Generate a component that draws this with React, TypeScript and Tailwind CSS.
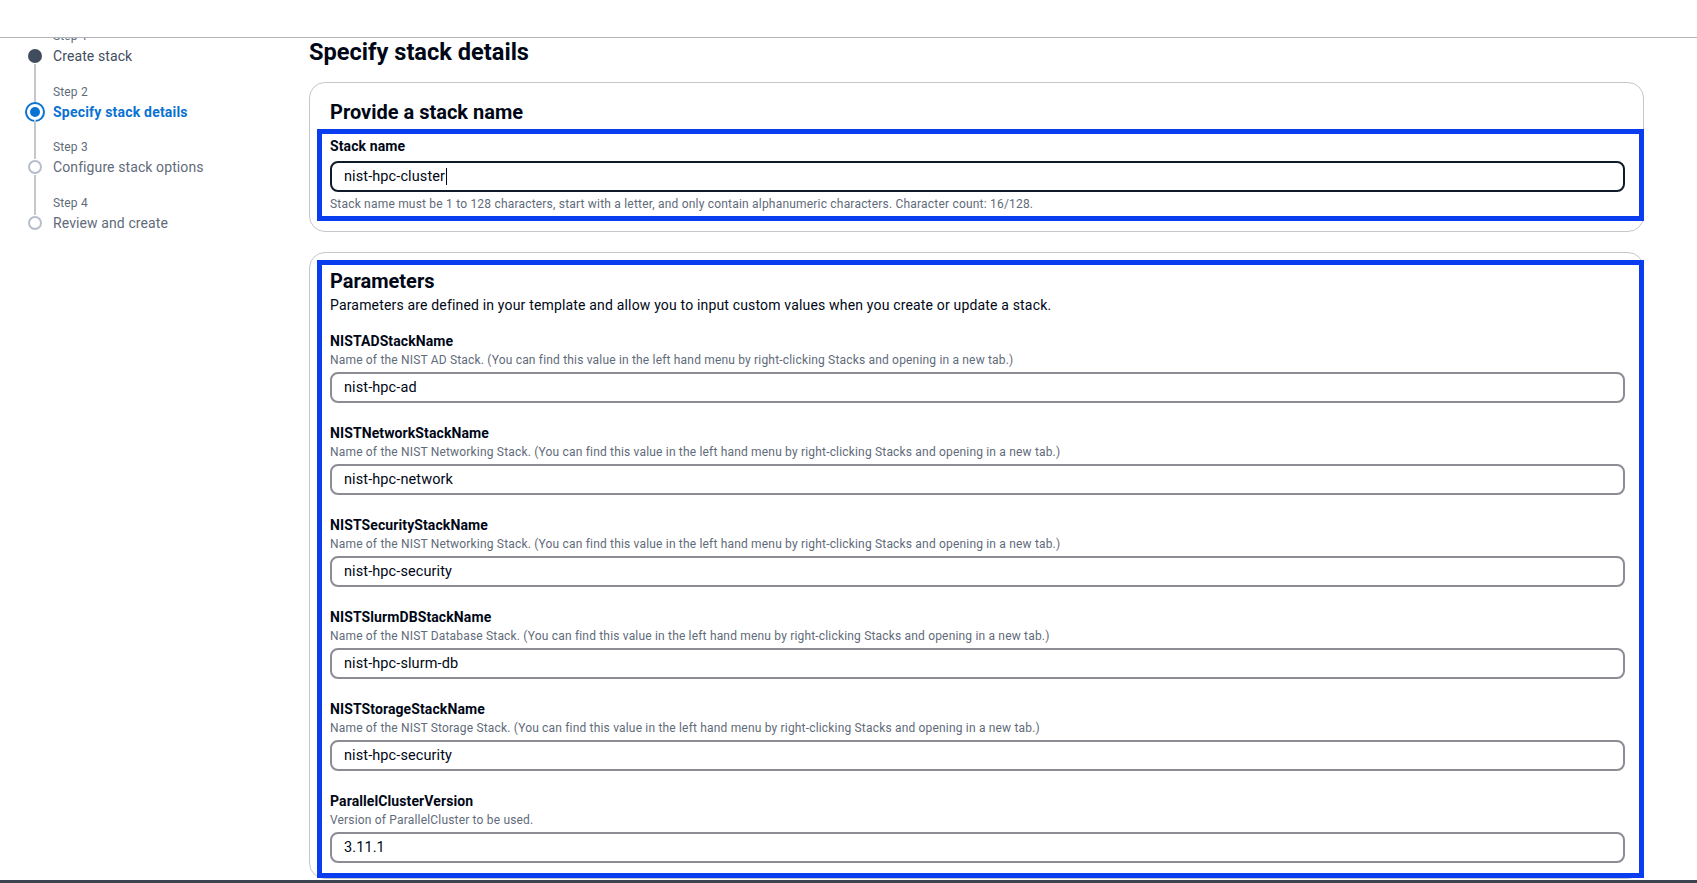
import React from "react";

const steps = [
  { label: "Step 1", title: "Create stack", state: "done" },
  { label: "Step 2", title: "Specify stack details", state: "current" },
  { label: "Step 3", title: "Configure stack options", state: "todo" },
  { label: "Step 4", title: "Review and create", state: "todo" },
];

const params = [
  {
    name: "NISTADStackName",
    desc: "Name of the NIST AD Stack. (You can find this value in the left hand menu by right-clicking Stacks and opening in a new tab.)",
    value: "nist-hpc-ad",
  },
  {
    name: "NISTNetworkStackName",
    desc: "Name of the NIST Networking Stack. (You can find this value in the left hand menu by right-clicking Stacks and opening in a new tab.)",
    value: "nist-hpc-network",
  },
  {
    name: "NISTSecurityStackName",
    desc: "Name of the NIST Networking Stack. (You can find this value in the left hand menu by right-clicking Stacks and opening in a new tab.)",
    value: "nist-hpc-security",
  },
  {
    name: "NISTSlurmDBStackName",
    desc: "Name of the NIST Database Stack. (You can find this value in the left hand menu by right-clicking Stacks and opening in a new tab.)",
    value: "nist-hpc-slurm-db",
  },
  {
    name: "NISTStorageStackName",
    desc: "Name of the NIST Storage Stack. (You can find this value in the left hand menu by right-clicking Stacks and opening in a new tab.)",
    value: "nist-hpc-security",
  },
  {
    name: "ParallelClusterVersion",
    desc: "Version of ParallelCluster to be used.",
    value: "3.11.1",
  },
];

function StepDot({ state }: { state: string }) {
  if (state === "done") return <span className="h-[14px] w-[14px] rounded-full bg-[#414d5c]" />;
  if (state === "current")
    return (
      <span className="flex h-[20px] w-[20px] items-center justify-center rounded-full border-2 border-[#0972d3] bg-white">
        <span className="h-[10px] w-[10px] rounded-full bg-[#0972d3]" />
      </span>
    );
  return <span className="h-[14px] w-[14px] rounded-full border-2 border-[#b6bec9] bg-white" />;
}

function Wizard() {
  return (
    <nav className="-mt-[12px] w-[309px] shrink-0 pl-[25px]">
      {steps.map((s, i) => (
        <div key={s.label} className="flex gap-2">
          {/* rail column */}
          <div className="flex w-[20px] flex-col items-center">
            <div className={"h-[22px] w-[2px] " + (i === 0 ? "" : "bg-[#c6c6cd]")} />
            <div className="flex h-[16px] items-center justify-center">
              <StepDot state={s.state} />
            </div>
            {i < steps.length - 1 && <div className="h-[17.5px] w-[2px] bg-[#c6c6cd]" />}
          </div>
          <div className="flex flex-col">
            <span className="text-[12px] leading-5 tracking-[0.15px] text-[#5f6b7a]">{s.label}</span>
            <span
              className={
                "text-[14px] leading-5 " +
                (s.state === "current"
                  ? "font-bold tracking-[0.2px] text-[#0972d3]"
                  : s.state === "done"
                  ? "tracking-[0.1px] text-[#414d5c]"
                  : "tracking-[0.1px] text-[#5f6b7a]")
              }
            >
              {s.title}
            </span>
          </div>
        </div>
      ))}
    </nav>
  );
}

function TextBox({ value, focused }: { value: string; focused?: boolean }) {
  return (
    <div
      className={
        "flex h-[31px] items-center rounded-[8px] border-2 px-[12px] text-[14.5px] tracking-[0.1px] text-[#000716] " +
        (focused ? "border-[#0f1b2a]" : "border-[#8c8c94]")
      }
    >
      <span>{value}</span>
      {focused && <span className="ml-px h-[17px] w-px bg-[#000716]" />}
    </div>
  );
}

export default function App() {
  return (
    <div className="flex h-[883px] w-full flex-col overflow-hidden bg-white font-['Roboto',sans-serif] text-[#000716]">
      <header className="relative z-10 h-[38px] shrink-0 border-b border-[#b4b4bb] bg-white" />

      <div className="flex min-h-0 flex-1 overflow-hidden">
        <Wizard />

        <main className="w-[1335px] shrink-0">
          <h1 className="text-[23.6px] font-bold leading-7">Specify stack details</h1>

          {/* Stack name container */}
          <section className="mt-4 rounded-[16px] border border-[#c6c6cd] pb-[10px]">
            <h2 className="pl-[20px] pt-[17px] text-[20px] font-bold leading-6">Provide a stack name</h2>
            <div className="-mr-px ml-[7px] mt-[5px] border-[5px] border-[#0a3cf0] pb-[4px] pl-2 pr-[14px] pt-[2px]">
              <div className="text-[14px] font-bold leading-5 tracking-[0.1px]">Stack name</div>
              <div className="mt-[5px]">
                <TextBox value="nist-hpc-cluster" focused />
              </div>
              <p className="mt-[4px] text-[12px] leading-4 tracking-[0.2px] text-[#5f6b7a]">
                Stack name must be 1 to 128 characters, start with a letter, and only contain alphanumeric
                characters. Character count: 16/128.
              </p>
            </div>
          </section>

          {/* Parameters container */}
          <section className="mt-[20px] rounded-[16px] border border-[#c6c6cd]">
            <div className="-mr-px ml-[7px] mt-[7px] border-[5px] border-[#0a3cf0] pb-[10px] pl-2 pr-[14px] pt-[4px]">
              <h2 className="text-[20px] font-bold leading-6">Parameters</h2>
              <p className="mt-[2px] text-[14px] leading-5 tracking-[0.17px] text-[#000716]">
                Parameters are defined in your template and allow you to input custom values when you create or
                update a stack.
              </p>
              <div className="mt-[16px] flex flex-col gap-[20px]">
                {params.map((p) => (
                  <div key={p.name}>
                    <div className="text-[14px] font-bold leading-5 tracking-[0.1px]">{p.name}</div>
                    <div className="mt-px text-[12px] leading-4 tracking-[0.18px] text-[#5f6b7a]">{p.desc}</div>
                    <div className="mt-[4px]">
                      <TextBox value={p.value} />
                    </div>
                  </div>
                ))}
              </div>
            </div>
          </section>
        </main>
      </div>

      <div className="h-[3px] shrink-0 bg-[#3b4450]" />
    </div>
  );
}
